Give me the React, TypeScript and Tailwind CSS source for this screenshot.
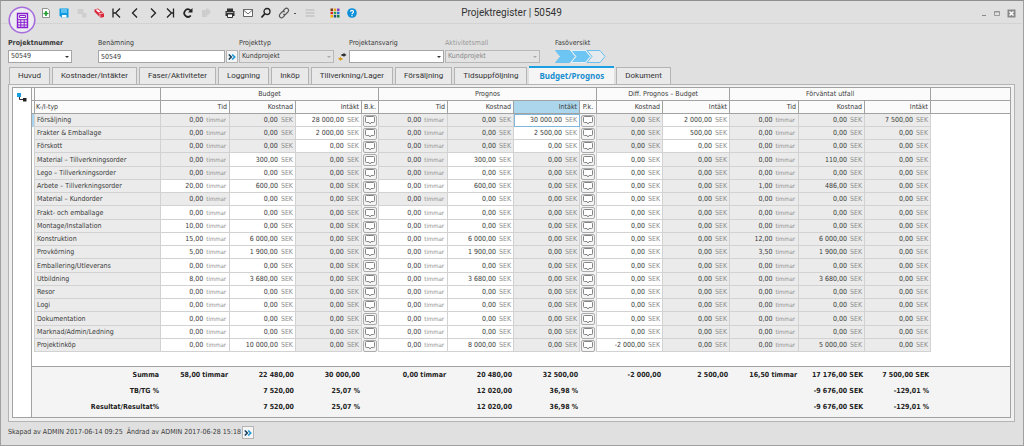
import type { ReactNode } from "react"
import { clsx } from "clsx"

type Row = {
  name: string
  kind: "income" | "cost"
  time: boolean
  budget: [string, string, string]
  forecast: [string, string, string]
  diff: [string, string]
  outcome: [string, string, string]
}

const Z = "0,00"

function row(name: string, values: Partial<Row> = {}): Row {
  return {
    name,
    kind: "cost",
    time: true,
    budget: [Z, Z, Z],
    forecast: [Z, Z, Z],
    diff: [Z, Z],
    outcome: [Z, Z, Z],
    ...values,
  }
}

const rows: Row[] = [
  row("Försäljning", { kind: "income", time: false, budget: [Z, Z, "28 000,00"], forecast: [Z, Z, "30 000,00"], diff: [Z, "2 000,00"], outcome: [Z, Z, "7 500,00"] }),
  row("Frakter & Emballage", { kind: "income", time: false, budget: [Z, Z, "2 000,00"], forecast: [Z, Z, "2 500,00"], diff: [Z, "500,00"] }),
  row("Förskott", { kind: "income", time: false }),
  row("Material – Tillverkningsorder", { time: false, budget: [Z, "300,00", Z], forecast: [Z, "300,00", Z], outcome: [Z, "110,00", Z] }),
  row("Lego – Tillverkningsorder", { time: false }),
  row("Arbete – Tillverkningsorder", { budget: ["20,00", "600,00", Z], forecast: [Z, "600,00", Z], outcome: ["1,00", "486,00", Z] }),
  row("Material – Kundorder", { time: false }),
  row("Frakt- och emballage"),
  row("Montage/Installation", { budget: ["10,00", Z, Z] }),
  row("Konstruktion", { budget: ["15,00", "6 000,00", Z], forecast: [Z, "6 000,00", Z], outcome: ["12,00", "6 000,00", Z] }),
  row("Provkörning", { budget: ["5,00", "1 900,00", Z], forecast: [Z, "1 900,00", Z], outcome: ["3,50", "1 900,00", Z] }),
  row("Emballering/Utleverans"),
  row("Utbildning", { budget: ["8,00", "3 680,00", Z], forecast: [Z, "3 680,00", Z], outcome: [Z, "3 680,00", Z] }),
  row("Resor"),
  row("Logi"),
  row("Dokumentation"),
  row("Marknad/Admin/Ledning"),
  row("Projektinköp", { budget: [Z, "10 000,00", Z], forecast: [Z, "8 000,00", Z], diff: ["-2 000,00", Z], outcome: [Z, "5 000,00", Z] }),
]

const summary = [
  ["Summa", "58,00 timmar", "22 480,00", "30 000,00", "", "0,00 timmar", "20 480,00", "32 500,00", "", "-2 000,00", "2 500,00", "16,50 timmar", "17 176,00 SEK", "7 500,00 SEK"],
  ["TB/TG %", "", "7 520,00", "25,07 %", "", "", "12 020,00", "36,98 %", "", "", "", "", "-9 676,00 SEK", "-129,01 %"],
  ["Resultat/Resultat%", "", "7 520,00", "25,07 %", "", "", "12 020,00", "36,98 %", "", "", "", "", "-9 676,00 SEK", "-129,01 %"],
]

const headers = ["Tid", "Kostnad", "Intäkt", "B.k.", "Tid", "Kostnad", "Intäkt", "P.k.", "Kostnad", "Intäkt", "Tid", "Kostnad", "Intäkt"]
const SELECTED_COLUMN = 6

const tabs = ["Huvud", "Kostnader/Intäkter", "Faser/Aktiviteter", "Loggning", "Inköp", "Tillverkning/Lager", "Försäljning", "Tidsuppföljning", "Budget/Prognos", "Dokument"]

function ToolButton({ label, children, disabled }: { label: string; children: ReactNode; disabled?: boolean }) {
  return (
    <button type="button" aria-label={label} disabled={disabled} className="flex h-4 w-4 items-center justify-center">
      <svg viewBox="0 0 12 12" className="h-3 w-3" fill="none">
        {children}
      </svg>
    </button>
  )
}

function Toolbar() {
  return (
    <div className="flex items-center pl-[37px]">
      <div className="flex w-[176px] justify-between">
        <ToolButton label="Ny">
          <path d="M2.5 1.5h5l2 2v7h-7z" fill="#fff" stroke="#777" strokeWidth=".8" />
          <path d="M6 4v5M3.500 6.500h5" stroke="#1c9a2c" strokeWidth="1.600" />
        </ToolButton>
        <ToolButton label="Spara">
          <path d="M1.500 1.500h9v9h-7l-2-2z" fill="#0c9be0" />
          <path d="M3 1.500h6V6H3z" fill="#5cc0f0" />
          <path d="M4 8h4.500v2.500H4z" fill="#fff" />
        </ToolButton>
        <ToolButton label="Spara som" disabled>
          <path d="M1.500 2h6v5h-6z M6 6h4.500v4.500H6z" fill="#cfcfcf" />
        </ToolButton>
        <ToolButton label="Radera">
          <path d="M1.500 2.500 5 1.500l6 5v3.500l-3.500.8-6-6z" fill="#d8283a" />
          <path d="m2.500 2.800 2.200-.5 3 2.500-2.200.8z" fill="#fff" />
          <path d="m6 6.800 4.500-.8M7 10.300V7.500" stroke="#fff" strokeWidth=".7" />
        </ToolButton>
        <ToolButton label="Första">
          <path d="M2 1.500v9M9 1.500 4.500 6 9 10.500M4 6H2" stroke="#222" strokeWidth="1.300" />
        </ToolButton>
        <ToolButton label="Föregående">
          <path d="M8 1.500 3.500 6 8 10.500" stroke="#222" strokeWidth="1.300" />
        </ToolButton>
        <ToolButton label="Nästa">
          <path d="M4 1.500 8.500 6 4 10.500" stroke="#222" strokeWidth="1.300" />
        </ToolButton>
        <ToolButton label="Sista">
          <path d="M9.500 1.500v9M3 1.500 7.500 6 3 10.500M7.500 6h2" stroke="#222" strokeWidth="1.300" />
        </ToolButton>
        <ToolButton label="Uppdatera">
          <path d="M8.800 8.500A3.700 3.700 0 1 1 8 3l1 1" stroke="#222" strokeWidth="1.700" />
          <path d="M10.500 1v4.500H6z" fill="#222" />
        </ToolButton>
        <ToolButton label="Kopiera" disabled>
          <path d="M2 3h5v7H2zM6 1.500h2L11 5 8 8H6z" fill="#cdcdcd" />
        </ToolButton>
      </div>
      <div className="flex gap-[2px] pl-2">
        <ToolButton label="Skriv ut">
          <path d="M3 1.500h6V4H3zM1.500 4h9v5h-9z" fill="#333" />
          <path d="M3 3h6M3.500 7h5v3.500h-5z" stroke="#333" fill="#fff" />
          <path d="M2.500 5.500h7" stroke="#ccc" strokeWidth=".8" />
        </ToolButton>
        <ToolButton label="E-post">
          <path d="M1.500 2.500h9v7h-9z" fill="#fff" stroke="#444" strokeWidth=".8" />
          <path d="m1.500 3 4.500 4 4.500-4" stroke="#444" strokeWidth=".8" />
        </ToolButton>
        <ToolButton label="Sök">
          <circle cx="7" cy="4.500" r="3" stroke="#222" strokeWidth="1.300" />
          <path d="M5 6.500 1.500 10.500" stroke="#222" strokeWidth="1.800" />
        </ToolButton>
        <ToolButton label="Länk">
          <path d="m5 4 2-2.200a2 2 0 0 1 3 3L8 7a2 2 0 0 1-2.700 0M7 8l-2 2.200a2 2 0 0 1-3-3L4 5a2 2 0 0 1 2.700 0" stroke="#555" strokeWidth="1.200" />
        </ToolButton>
      </div>
      <span className="ml-[2px] h-px w-[2px] bg-neutral-600" />
      <div className="flex gap-[9px] pl-[6px]">
        <ToolButton label="Lista" disabled>
          <path d="M1.500 2h9v2h-9zM1.500 5h9v2h-9zM1.500 8h9v2h-9z" fill="#cbcbcb" />
        </ToolButton>
        <div className="flex gap-[1px]">
          <ToolButton label="Färger">
            <path d="M1.500 1.500H4V4H1.500z" fill="#7a3b10" />
            <path d="M4.800 1.500h2.400V4H4.800z" fill="#e8a020" />
            <path d="M8 1.500h2.500V4H8z" fill="#8a40c0" />
            <path d="M1.500 4.800H4v2.400H1.500z" fill="#e02020" />
            <path d="M4.800 4.800h2.400v2.400H4.800z" fill="#30a040" />
            <path d="M8 4.800h2.500v2.400H8z" fill="#2070d0" />
            <path d="M1.500 8H4v2.500H1.500z" fill="#f0b000" />
            <path d="M4.800 8h2.400v2.500H4.800z" fill="#205080" />
            <path d="M8 8h2.500v2.500H8z" fill="#208040" />
          </ToolButton>
          <ToolButton label="Hjälp">
            <circle cx="6" cy="6" r="4.800" fill="#0c8fd8" />
            <path d="M4.500 4.800c0-2 3-2 3 0C7.500 6 6 5.800 6 7.200M6 8v1.200" stroke="#fff" strokeWidth="1.200" />
          </ToolButton>
        </div>
      </div>
    </div>
  )
}

function TitleBar() {
  return (
    <header className="relative grid h-[23px] grid-cols-[1fr_auto_1fr] items-center border-b border-[#d3d3d3] pt-[2px]">
      <Toolbar />
      <h1 className="font-['Roboto'] text-[10px] leading-4 text-[#333]">Projektregister | 50549</h1>
      <div className="flex items-center justify-end gap-[3px] pr-[6px] text-[#888]">
        <button type="button" aria-label="Minimera" className="h-[9px] w-[9px]">
          <svg viewBox="0 0 9 9"><path d="M1 6h4v1H1z" fill="currentColor" /></svg>
        </button>
        <button type="button" aria-label="Maximera" className="h-[9px] w-[9px]">
          <svg viewBox="0 0 9 9"><path d="M1.500 2.500h5v4h-5zM1.500 3h5" fill="none" stroke="currentColor" strokeWidth=".8" /></svg>
        </button>
        <button type="button" aria-label="Stäng" className="ml-[2px] h-[9px] w-[9px]">
          <svg viewBox="0 0 9 9"><path d="M.5.500h8v8h-8z" fill="currentColor" /><path d="m2.500 2.500 4 4m0-4-4 4" stroke="#fff" strokeWidth="1.500" /></svg>
        </button>
      </div>
      <svg viewBox="0 0 28 28" className="absolute top-[5px] left-[7px] h-7 w-7" fill="none">
        <circle cx="14" cy="14" r="12.800" fill="#ececf2" stroke="#a86fdc" strokeWidth="1.600" />
        <path d="M9.500 7.500h10v14h-10z" stroke="#8a1fd0" strokeWidth="1.400" />
        <path d="M11.500 9.500h6v2h-6z" stroke="#8a1fd0" />
        <path d="M9.500 13.700h10M9.500 16.300h10M9.500 19h10M12.800 13.500v8M16.200 13.500v8" stroke="#8a1fd0" />
      </svg>
    </header>
  )
}

function SelectField({ id, label, value, disabled, bold, className }: {
  id: string
  label: string
  value: string
  disabled?: boolean
  bold?: boolean
  className: string
}) {
  return (
    <div className={className}>
      <label htmlFor={id} className={clsx("block h-3 whitespace-nowrap leading-[10px]", bold && "font-bold", id === "template" && "text-[#999]")}>
        {label}
      </label>
      <div className="relative">
        <select
          id={id}
          disabled={disabled}
          defaultValue={value}
          className={clsx(
            "block h-[13px] w-full appearance-none border pl-[2px] leading-[11px] opacity-100",
            disabled ? "border-[#b8b8b8] bg-[#e3e3e3]" : "border-[#a6a6a6] bg-white",
            id === "template" && "text-[#888]",
          )}
        >
          <option>{value}</option>
        </select>
        <svg viewBox="0 0 4 2" className={clsx("pointer-events-none absolute top-[6px] right-[3px] h-[2px] w-1", disabled ? "text-[#aaa]" : "text-[#333]")}>
          <path d="M0 0h4L2 2z" fill="currentColor" />
        </svg>
      </div>
    </div>
  )
}

function MoreButton({ label }: { label: string }) {
  return (
    <button type="button" aria-label={label} className="flex h-[13px] w-3 items-center justify-center border border-[#b5b5b5] bg-[#f4f4f4]">
      <svg viewBox="0 0 10 8" className="h-2 w-[10px]" fill="none" strokeWidth="1.600">
        <path d="M1.800 1.500 4.300 4 1.800 6.500" stroke="#16405e" />
        <path d="M5.200 1.500 7.700 4 5.200 6.500" stroke="#1797d4" />
      </svg>
    </button>
  )
}

function ProjectForm() {
  return (
    <form className="flex items-end pt-[14px] pl-[7px]">
      <SelectField id="number" label="Projektnummer" value="50549" bold className="w-16" />
      <div className="ml-[26px] w-[127px]">
        <label htmlFor="name" className="block h-3 leading-[10px]">Benämning</label>
        <input id="name" type="text" defaultValue="50549" className="block h-[13px] w-full border border-[#a6a6a6] bg-white pl-[2px] leading-[11px]" />
      </div>
      <div className="ml-px">
        <MoreButton label="Visa projekt" />
      </div>
      <SelectField id="type" label="Projekttyp" value="Kundprojekt" disabled className="ml-px w-[95px]" />
      <button type="button" aria-label="Byt typ" className="ml-[2px] flex h-[13px] w-3 items-center justify-center">
        <svg viewBox="0 0 10 8" className="h-2 w-[10px]">
          <path d="M4.500 1h2V-.3L9.500 2 6.500 4V3h-2z" fill="#333" />
          <path d="M5.500 6.800H4V8L1 5.800 4 3.700V5h1.500z" fill="#d99a1c" />
        </svg>
      </button>
      <SelectField id="manager" label="Projektansvarig" value="" className="ml-px w-[95px]" />
      <SelectField id="template" label="Aktivitetsmall" value="Kundprojekt" disabled className="ml-px w-[95px]" />
      <div className="ml-[15px]">
        <p className="h-3 leading-[10px]">Fasöversikt</p>
        <svg viewBox="0 0 52 13" className="h-[13px] w-[52px]" stroke="#6cc0ee">
          <path d="M.5.500h14l5 6-5 6H.5l5-6z" fill="#6cc5f3" />
          <path d="M16 .5h14.500l5 6-5 6H16l5-6z" fill="#6cc5f3" stroke="#e0f2fb" />
          <path d="M32 .5h13l5 6-5 6H32l5-6z" fill="#e4eaee" />
        </svg>
      </div>
    </form>
  )
}

function Tabs() {
  return (
    <nav role="tablist" className="flex h-[18px] items-end gap-[2px] pl-2 font-['Roboto'] text-[8px] text-[#333]">
      {tabs.map((tab) => {
        const active = tab === "Budget/Prognos"
        return (
          <button
            key={tab}
            type="button"
            role="tab"
            aria-selected={active}
            className={clsx(
              "leading-[14px] whitespace-nowrap",
              active
                ? "h-[18px] border-t-2 border-[#1a9fe0] bg-[#f5f5f5] px-[10px] font-['Noto_Sans'] font-bold text-[#1a8fd0]"
                : "h-[17px] border border-b-0 border-[#b4b4b4] bg-[#e9e9e9] px-2",
            )}
          >
            {tab}
          </button>
        )
      })}
    </nav>
  )
}

function ValueCell({ value, unit, editable, selected }: { value: string; unit: "timmar" | "SEK"; editable?: boolean; selected?: boolean }) {
  return (
    <td
      className={clsx(
        "border-r border-b border-[#d2d2d2] text-right",
        editable ? "bg-white" : "bg-[#ebebeb]",
        unit === "timmar" ? "pr-[3px]" : "pr-[2px]",
        selected && "outline outline-1 -outline-offset-1 outline-[#7fb8dc]",
      )}
    >
      {value}
      <span className={clsx("ml-[3px] text-[#8c8c8c]", unit === "timmar" && "text-[6px]")}>{unit}</span>
    </td>
  )
}

function CommentCell({ label }: { label: string }) {
  return (
    <td className="border-r border-[#d2d2d2] bg-[#f2f2f2]">
      <button type="button" aria-label={label} className="mx-auto flex h-3 w-[14px] items-center justify-center rounded-xs border border-[#ababab] bg-[#f4f4f4]">
        <svg viewBox="0 0 10 9" className="h-[9px] w-[10px]" fill="#fff" stroke="#777" strokeWidth=".9">
          <path d="M1.500.500h7q1 0 1 1v4q0 1-1 1H6L5 8 4 6.500H1.500q-1 0-1-1v-4q0-1 1-1z" />
        </svg>
      </button>
    </td>
  )
}

function BudgetTable() {
  const groupClass = "h-[13px] border-r border-b border-[#a2a2a2] font-normal"
  return (
    <table className="w-full table-fixed border-separate border-spacing-0 leading-[10px] whitespace-nowrap">
      <colgroup>
        <col className="w-[3px]" />
        <col className="w-[126px]" />
        <col className="w-[69px]" />
        <col className="w-[66px]" />
        <col className="w-[66px]" />
        <col className="w-[17px]" />
        <col className="w-[69px]" />
        <col className="w-[66px]" />
        <col className="w-[66px]" />
        <col className="w-[17px]" />
        <col className="w-[66px]" />
        <col className="w-[67px]" />
        <col className="w-[69px]" />
        <col className="w-[66px]" />
        <col className="w-[66px]" />
        <col />
      </colgroup>
      <thead className="bg-[#fbfbfb]">
        <tr>
          <th className={groupClass} />
          <th className={groupClass} />
          <th colSpan={4} className={groupClass}>Budget</th>
          <th colSpan={4} className={groupClass}>Prognos</th>
          <th colSpan={2} className={groupClass}>Diff. Prognos – Budget</th>
          <th colSpan={3} className={groupClass}>Förväntat utfall</th>
          <th className="border-b border-[#a2a2a2]" />
        </tr>
        <tr>
          <th className={groupClass} />
          <th className={clsx(groupClass, "pl-px text-left")}>K-/I-typ</th>
          {headers.map((header, i) => (
            <th
              key={i}
              className={clsx(groupClass, header.endsWith("k.") ? "text-center" : "pr-[2px] text-right", i === SELECTED_COLUMN && "bg-[#abd6eb]")}
            >
              {header}
            </th>
          ))}
          <th className="border-b border-[#a2a2a2]" />
        </tr>
      </thead>
      <tbody>
        {rows.map((r, i) => {
          const income = r.kind === "income"
          return (
            <tr key={r.name} className="h-[13px] nth-[4n]:h-[14px]">
              <td className={clsx("border-r border-[#d2d2d2]", i === 0 && "bg-[#a9d3ee]")} />
              <td className="border-r border-b border-[#d2d2d2] bg-[#ebebeb] pl-[2px]">{r.name}</td>
              <ValueCell value={r.budget[0]} unit="timmar" editable={r.time} />
              <ValueCell value={r.budget[1]} unit="SEK" editable={!income} />
              <ValueCell value={r.budget[2]} unit="SEK" editable={income} />
              <CommentCell label={`Budgetkommentar ${r.name}`} />
              <ValueCell value={r.forecast[0]} unit="timmar" editable={r.time} />
              <ValueCell value={r.forecast[1]} unit="SEK" editable={!income} />
              <ValueCell value={r.forecast[2]} unit="SEK" editable={income} selected={i === 0} />
              <CommentCell label={`Prognoskommentar ${r.name}`} />
              <ValueCell value={r.diff[0]} unit="SEK" editable={!income} />
              <ValueCell value={r.diff[1]} unit="SEK" editable={income} />
              <ValueCell value={r.outcome[0]} unit="timmar" />
              <ValueCell value={r.outcome[1]} unit="SEK" />
              <ValueCell value={r.outcome[2]} unit="SEK" />
              <td />
            </tr>
          )
        })}
        <tr className="h-[15px]">
          <td colSpan={16} className="border-b border-[#a2a2a2]" />
        </tr>
      </tbody>
      <tfoot className="bg-[#f4f4f4] font-bold text-[#222]">
        {summary.map(([label, ...values]) => (
          <tr key={label} className="h-4">
            <td />
            <th scope="row" className="pr-[2px] text-right">{label}</th>
            {values.map((value, i) => (
              <td key={i} className="pr-[2px] text-right">{value}</td>
            ))}
            <td />
          </tr>
        ))}
      </tfoot>
    </table>
  )
}

export default function App() {
  return (
    <div className="min-h-screen border border-[#a0a0a0] border-t-[#8f8f8f] bg-[#e0e0e0] pr-px font-['DejaVu_Sans_Condensed','DejaVu_Sans',sans-serif] text-[7px] text-[#3a3a3a]">
      <TitleBar />
      <ProjectForm />
      <div className="pt-[3px]">
        <Tabs />
      </div>
      <main className="mx-[7px] border border-[#b4b4b4] bg-[#f0f0f0] px-[3px] pt-[2px] pb-[3px]">
        <div className="flex border border-[#a2a2a2] bg-white">
          <aside className="w-[19px] shrink-0 border-r border-[#a2a2a2] pt-[5px] pl-1">
            <button type="button" aria-label="Visa träd" className="block h-[9px] w-[10px]">
              <svg viewBox="0 0 10 9" fill="none">
                <path d="M0 0h4v4H0z" fill="#1a9fe0" />
                <path d="M2.500 4v2.500H6" stroke="#333" />
                <path d="M6 5h3.500v3.500H6z" fill="#222" />
              </svg>
            </button>
          </aside>
          <div className="min-w-0 flex-1 bg-[#f4f4f4] pb-[2px]">
            <div className="bg-white">
              <BudgetTable />
            </div>
          </div>
        </div>
      </main>
      <footer className="flex items-center pt-1 pb-1 pl-[7px]">
        <span>Skapad av ADMIN 2017-06-14 09:25</span>
        <span className="ml-1">Ändrad av ADMIN 2017-06-28 15:18</span>
        <span className="ml-px">
          <MoreButton label="Visa historik" />
        </span>
      </footer>
    </div>
  )
}
